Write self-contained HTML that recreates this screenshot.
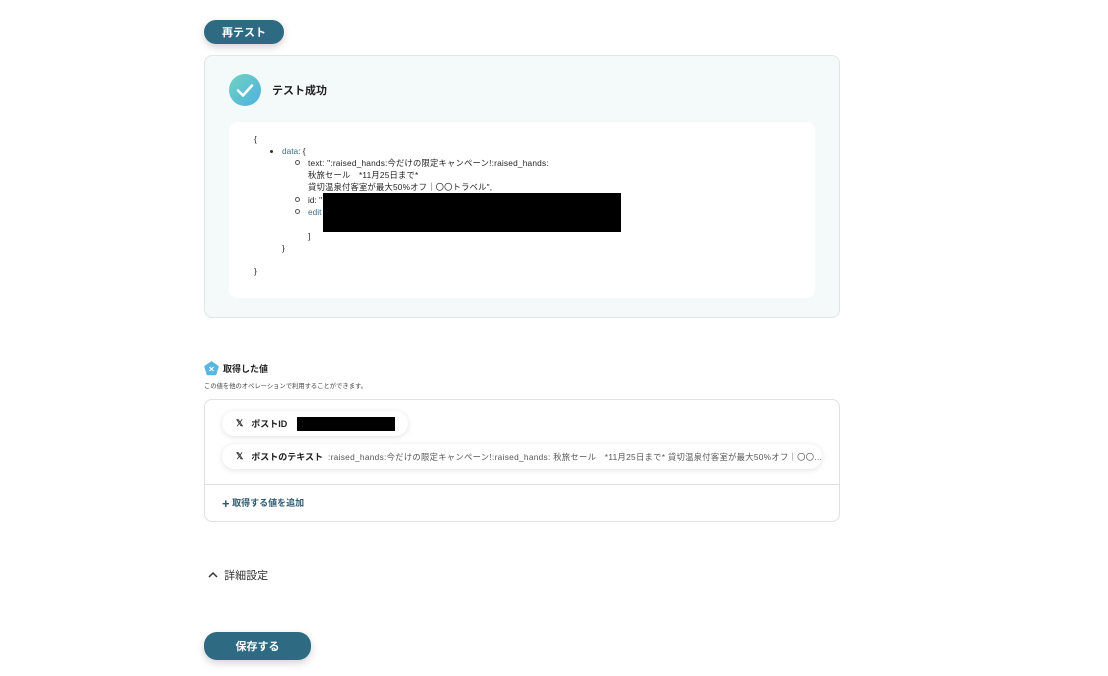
<!DOCTYPE html>
<html><head><meta charset="utf-8"><style>
*{margin:0;padding:0;box-sizing:border-box}
body{width:1108px;height:676px;background:#fff;font-family:"Liberation Sans","Noto Sans CJK JP",sans-serif;color:#222;position:relative;overflow:hidden}
.abs{position:absolute}
.btn{background:#2e6a82;color:#fff;font-weight:bold;font-size:11px;border-radius:13px;display:flex;align-items:center;justify-content:center;box-shadow:0 3px 8px rgba(0,0,0,.18)}
.t{font-size:8.3px;line-height:12px;position:absolute;white-space:nowrap}
.blue{color:#3d6f8e}
.circ{position:absolute;width:5px;height:5px;border:1px solid #555;border-radius:50%}
.pill{position:absolute;background:#fff;border-radius:13px;box-shadow:0 1px 6px rgba(0,0,0,.12);display:flex;align-items:center;font-size:9px;font-weight:bold;white-space:nowrap;overflow:hidden}
</style></head><body>
<div class="abs btn" style="left:204px;top:20px;width:80px;height:24px">再テスト</div>
<div class="abs" style="left:204px;top:55px;width:636px;height:263px;background:#f4f9f9;border:1px solid #e1e6e8;border-radius:8px"></div>
<div class="abs" style="left:229px;top:74px;width:32px;height:32px;border-radius:50%;background:linear-gradient(135deg,#6fd3c0,#4eb0df)">
<svg width="32" height="32"><path d="M9 16.5l5 5 9-10" stroke="#fff" stroke-width="2.6" fill="none" stroke-linecap="round" stroke-linejoin="round"/></svg></div>
<div class="abs" style="left:272px;top:82px;font-size:11px;font-weight:bold">テスト成功</div>
<div class="abs" style="left:229px;top:122px;width:586px;height:176px;background:#fff;border-radius:8px"></div>
<div class="t" style="left:254px;top:133px">{</div>
<div class="abs" style="left:270px;top:150px;width:3px;height:3px;background:#333;border-radius:50%"></div>
<div class="t" style="left:282px;top:145px"><span class="blue">data</span>: {</div>
<div class="circ" style="left:295px;top:160px"></div>
<div class="t" style="left:308px;top:157px;letter-spacing:.2px">text: ":raised_hands:今だけの限定キャンペーン!:raised_hands:</div>
<div class="t" style="left:308px;top:169px;letter-spacing:.2px">秋旅セール　*11月25日まで*</div>
<div class="t" style="left:308px;top:181px;letter-spacing:.2px">貸切温泉付客室が最大50%オフ｜〇〇トラベル",</div>
<div class="circ" style="left:295px;top:197px"></div>
<div class="t" style="left:308px;top:194px">id: "</div>
<div class="circ" style="left:295px;top:209px"></div>
<div class="t blue" style="left:308px;top:206px">edit</div>
<div class="abs" style="left:323px;top:193px;width:298px;height:39px;background:#000"></div>
<div class="t" style="left:308px;top:230px">]</div>
<div class="t" style="left:282px;top:242px">}</div>
<div class="t" style="left:254px;top:265px">}</div>
<svg class="abs" style="left:204px;top:361px" width="15" height="15"><path d="M7.5 1L14 5.5 11.5 13.5H3.5L1 5.5Z" fill="#5ab6e0" stroke="#5ab6e0" stroke-width="1.5" stroke-linejoin="round"/><path d="M5.5 6l4 4M9.5 6l-4 4" stroke="#fff" stroke-width="1.2"/></svg>
<div class="abs" style="left:223px;top:362px;font-size:9px;font-weight:bold">取得した値</div>
<div class="abs" style="left:204px;top:381px;font-size:6.3px;color:#444">この値を他のオペレーションで利用することができます。</div>
<div class="abs" style="left:204px;top:399px;width:636px;height:123px;border:1px solid #e0e0e0;border-radius:8px"></div>
<div class="abs" style="left:205px;top:484px;width:634px;height:1px;background:#e0e0e0"></div>
<div class="pill" style="left:222px;top:411px;width:186px;height:25px;padding-left:14px">𝕏<span style="margin-left:8px">ポストID</span></div>
<div class="abs" style="left:297px;top:417px;width:98px;height:14px;background:#000"></div>
<div class="pill" style="left:222px;top:444px;width:600px;height:25px;padding-left:14px">𝕏<span style="margin-left:8px">ポストのテキスト</span><span style="font-weight:normal;font-size:8.3px;letter-spacing:.3px;color:#555;margin-left:5px">:raised_hands:今だけの限定キャンペーン!:raised_hands: 秋旅セール　*11月25日まで* 貸切温泉付客室が最大50%オフ｜〇〇...</span></div>
<div class="abs" style="left:222px;top:496px;font-size:9px;font-weight:bold;color:#2e5a70"><span style="font-size:13px;vertical-align:-2px">+</span> 取得する値を追加</div>
<div class="abs" style="left:208px;top:567px;font-size:11px;color:#333"><svg width="10" height="10" style="vertical-align:-1px"><path d="M1 7l4-4 4 4" stroke="#333" stroke-width="1.5" fill="none"/></svg>&nbsp; 詳細設定</div>
<div class="abs btn" style="left:204px;top:632px;width:107px;height:28px">保存する</div>
</body></html>
